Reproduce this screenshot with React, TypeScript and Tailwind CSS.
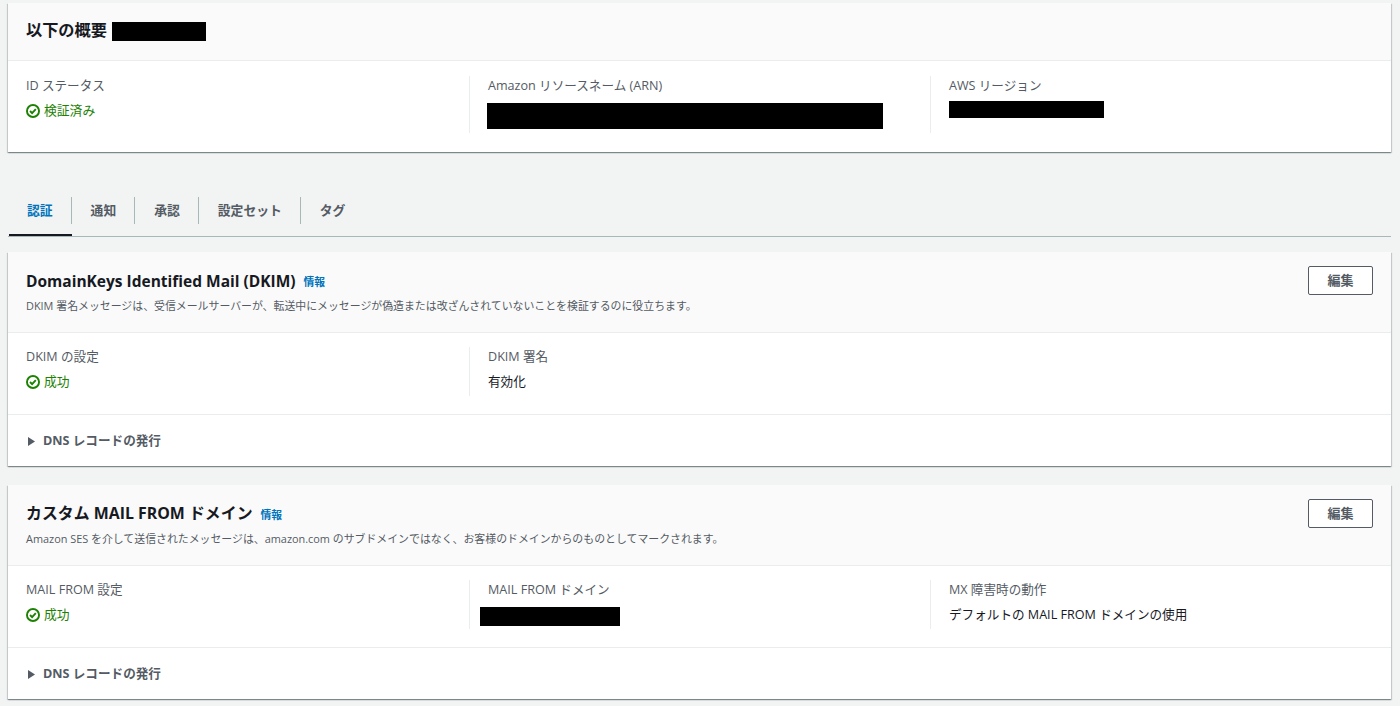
import { ReactNode } from "react";

const font = { fontFamily: '"Open Sans", "Noto Sans CJK JP", sans-serif' };

function StatusOk({ label }: { label: string }) {
    return (
        <div className="flex h-[20px] items-center gap-[4px] text-[12.8px] text-[#1d8102]">
            <svg viewBox="0 0 16 16" className="h-[14px] w-[14px] shrink-0" fill="none" stroke="currentColor" strokeWidth="2.2">
                <circle cx="8" cy="8" r="6.9" />
                <path d="m4.6 8 2.4 2.4 4.2-4.6" />
            </svg>
            <span>{label}</span>
        </div>
    );
}

function Field({ label, children, divider, tall }: { label: string; children: ReactNode; divider?: boolean; tall?: boolean }) {
    return (
        <div className={`${tall ? "h-[57px]" : "h-[49px]"} ${divider ? "border-l border-[#eaeded] pl-[18px]" : ""}`}>
            <div className="h-[20px] text-[12.6px] leading-[20px] text-[#545b64]">{label}</div>
            <div className="mt-[5px]">{children}</div>
        </div>
    );
}

function Row({ children }: { children: ReactNode }) {
    return (
        <div className="grid grid-cols-[443px_461px_1fr] border-b border-[#eaeded] px-[18px] pt-[14px] pb-[18px]">
            {children}
        </div>
    );
}

function Card({ children }: { children: ReactNode }) {
    return <section className="mx-[8px] w-[1383px] bg-white shadow-[0_1px_1px_0_rgba(0,28,36,0.3),1px_1px_1px_0_rgba(0,28,36,0.15),-1px_1px_1px_0_rgba(0,28,36,0.15)]">{children}</section>;
}

function SectionHeader({ title, titleClass, descClass, description }: { title: string; titleClass: string; descClass: string; description: string }) {
    return (
        <div className="flex h-[81px] items-start justify-between border-b border-[#eaeded] bg-[#fafafa] px-[18px] pt-[14px]">
            <div>
                <div className="flex h-[30px] items-center gap-[8px]">
                    <h2 className={`leading-[30px] font-bold text-[#16191f] ${titleClass}`}>{title}</h2>
                    <span className="mt-[2px] text-[10.8px] font-bold text-[#0073bb]">情報</span>
                </div>
                <p className={`text-[10.9px] leading-[16px] text-[#545b64] ${descClass}`}>{description}</p>
            </div>
            <button type="button" className="h-[29px] w-[65px] rounded-[2px] border border-[#545b64] bg-white text-[13px] font-bold text-[#545b64]">
                編集
            </button>
        </div>
    );
}

function DnsRow() {
    return (
        <div className="flex h-[51px] items-center gap-[8px] pt-[2px] pl-[20px] text-[12.6px] font-bold text-[#545b64]">
            <svg viewBox="0 0 7 9" className="h-[9px] w-[7px] shrink-0" fill="currentColor">
                <path d="M0 0v9l7-4.5z" />
            </svg>
            <span>DNS レコードの発行</span>
        </div>
    );
}

const tabs = ["認証", "通知", "承認", "設定セット", "タグ"];

export default function App() {
    return (
        <div className="h-[706px] overflow-hidden bg-[#f2f3f3] pt-[3px]" style={font}>
            <Card>
                <div className="flex h-[58px] items-center gap-[5px] border-b border-[#eaeded] bg-[#fafafa] pb-[2px] pl-[18px]">
                    <h1 className="text-[16.2px] font-bold text-[#16191f]">以下の概要</h1>
                    <div className="mt-[2px] h-[19px] w-[94px] bg-black" />
                </div>
                <div className="grid h-[91px] grid-cols-[443px_461px_1fr] px-[18px] pt-[15px]">
                    <Field label="ID ステータス" tall>
                        <StatusOk label="検証済み" />
                    </Field>
                    <Field label="Amazon リソースネーム (ARN)" divider tall>
                        <div className="mt-[7px] ml-[-1px] h-[26px] w-[396px] bg-black" />
                    </Field>
                    <Field label="AWS リージョン" divider tall>
                        <div className="h-[17px] w-[155px] bg-black" />
                    </Field>
                </div>
            </Card>

            <div className="mx-[8px] mt-[38px] flex h-[47px] w-[1383px] border-b border-[#aab7b8] pl-[1px]">
                {tabs.map((tab, i) => (
                    <div key={tab} className={`h-[46px] pt-[7px] ${i === 0 ? "border-b-2 border-[#16191f]" : ""}`}>
                        <div className={`flex h-[27px] items-center pr-[18px] text-[12.8px] font-bold ${i === 0 ? "pl-[18px] text-[#0073bb]" : "pl-[19px] text-[#545b64]"} ${i < 4 ? "border-r border-[#aab7b8]" : ""}`}>
                            {tab}
                        </div>
                    </div>
                ))}
            </div>

            <div className="mt-[15px]">
                <Card>
                    <SectionHeader
                        title="DomainKeys Identified Mail (DKIM)"
                        titleClass="text-[15.5px]"
                        descClass="mt-[2px]"
                        description="DKIM 署名メッセージは、受信メールサーバーが、転送中にメッセージが偽造または改ざんされていないことを検証するのに役立ちます。"
                    />
                    <Row>
                        <Field label="DKIM の設定">
                            <StatusOk label="成功" />
                        </Field>
                        <Field label="DKIM 署名" divider>
                            <div className="text-[12.6px] leading-[20px] text-[#16191f]">有効化</div>
                        </Field>
                    </Row>
                    <DnsRow />
                </Card>
            </div>

            <div className="mt-[19px]">
                <Card>
                    <SectionHeader
                        title="カスタム MAIL FROM ドメイン"
                        titleClass="text-[15.9px] -translate-y-px"
                        descClass="mt-[2px]"
                        description="Amazon SES を介して送信されたメッセージは、amazon.com のサブドメインではなく、お客様のドメインからのものとしてマークされます。"
                    />
                    <Row>
                        <Field label="MAIL FROM 設定">
                            <StatusOk label="成功" />
                        </Field>
                        <Field label="MAIL FROM ドメイン" divider>
                            <div className="mt-[7px] ml-[-8px] h-[19px] w-[140px] bg-black" />
                        </Field>
                        <Field label="MX 障害時の動作" divider>
                            <div className="text-[12.6px] leading-[20px] text-[#16191f]">デフォルトの MAIL FROM ドメインの使用</div>
                        </Field>
                    </Row>
                    <DnsRow />
                </Card>
            </div>
        </div>
    );
}
